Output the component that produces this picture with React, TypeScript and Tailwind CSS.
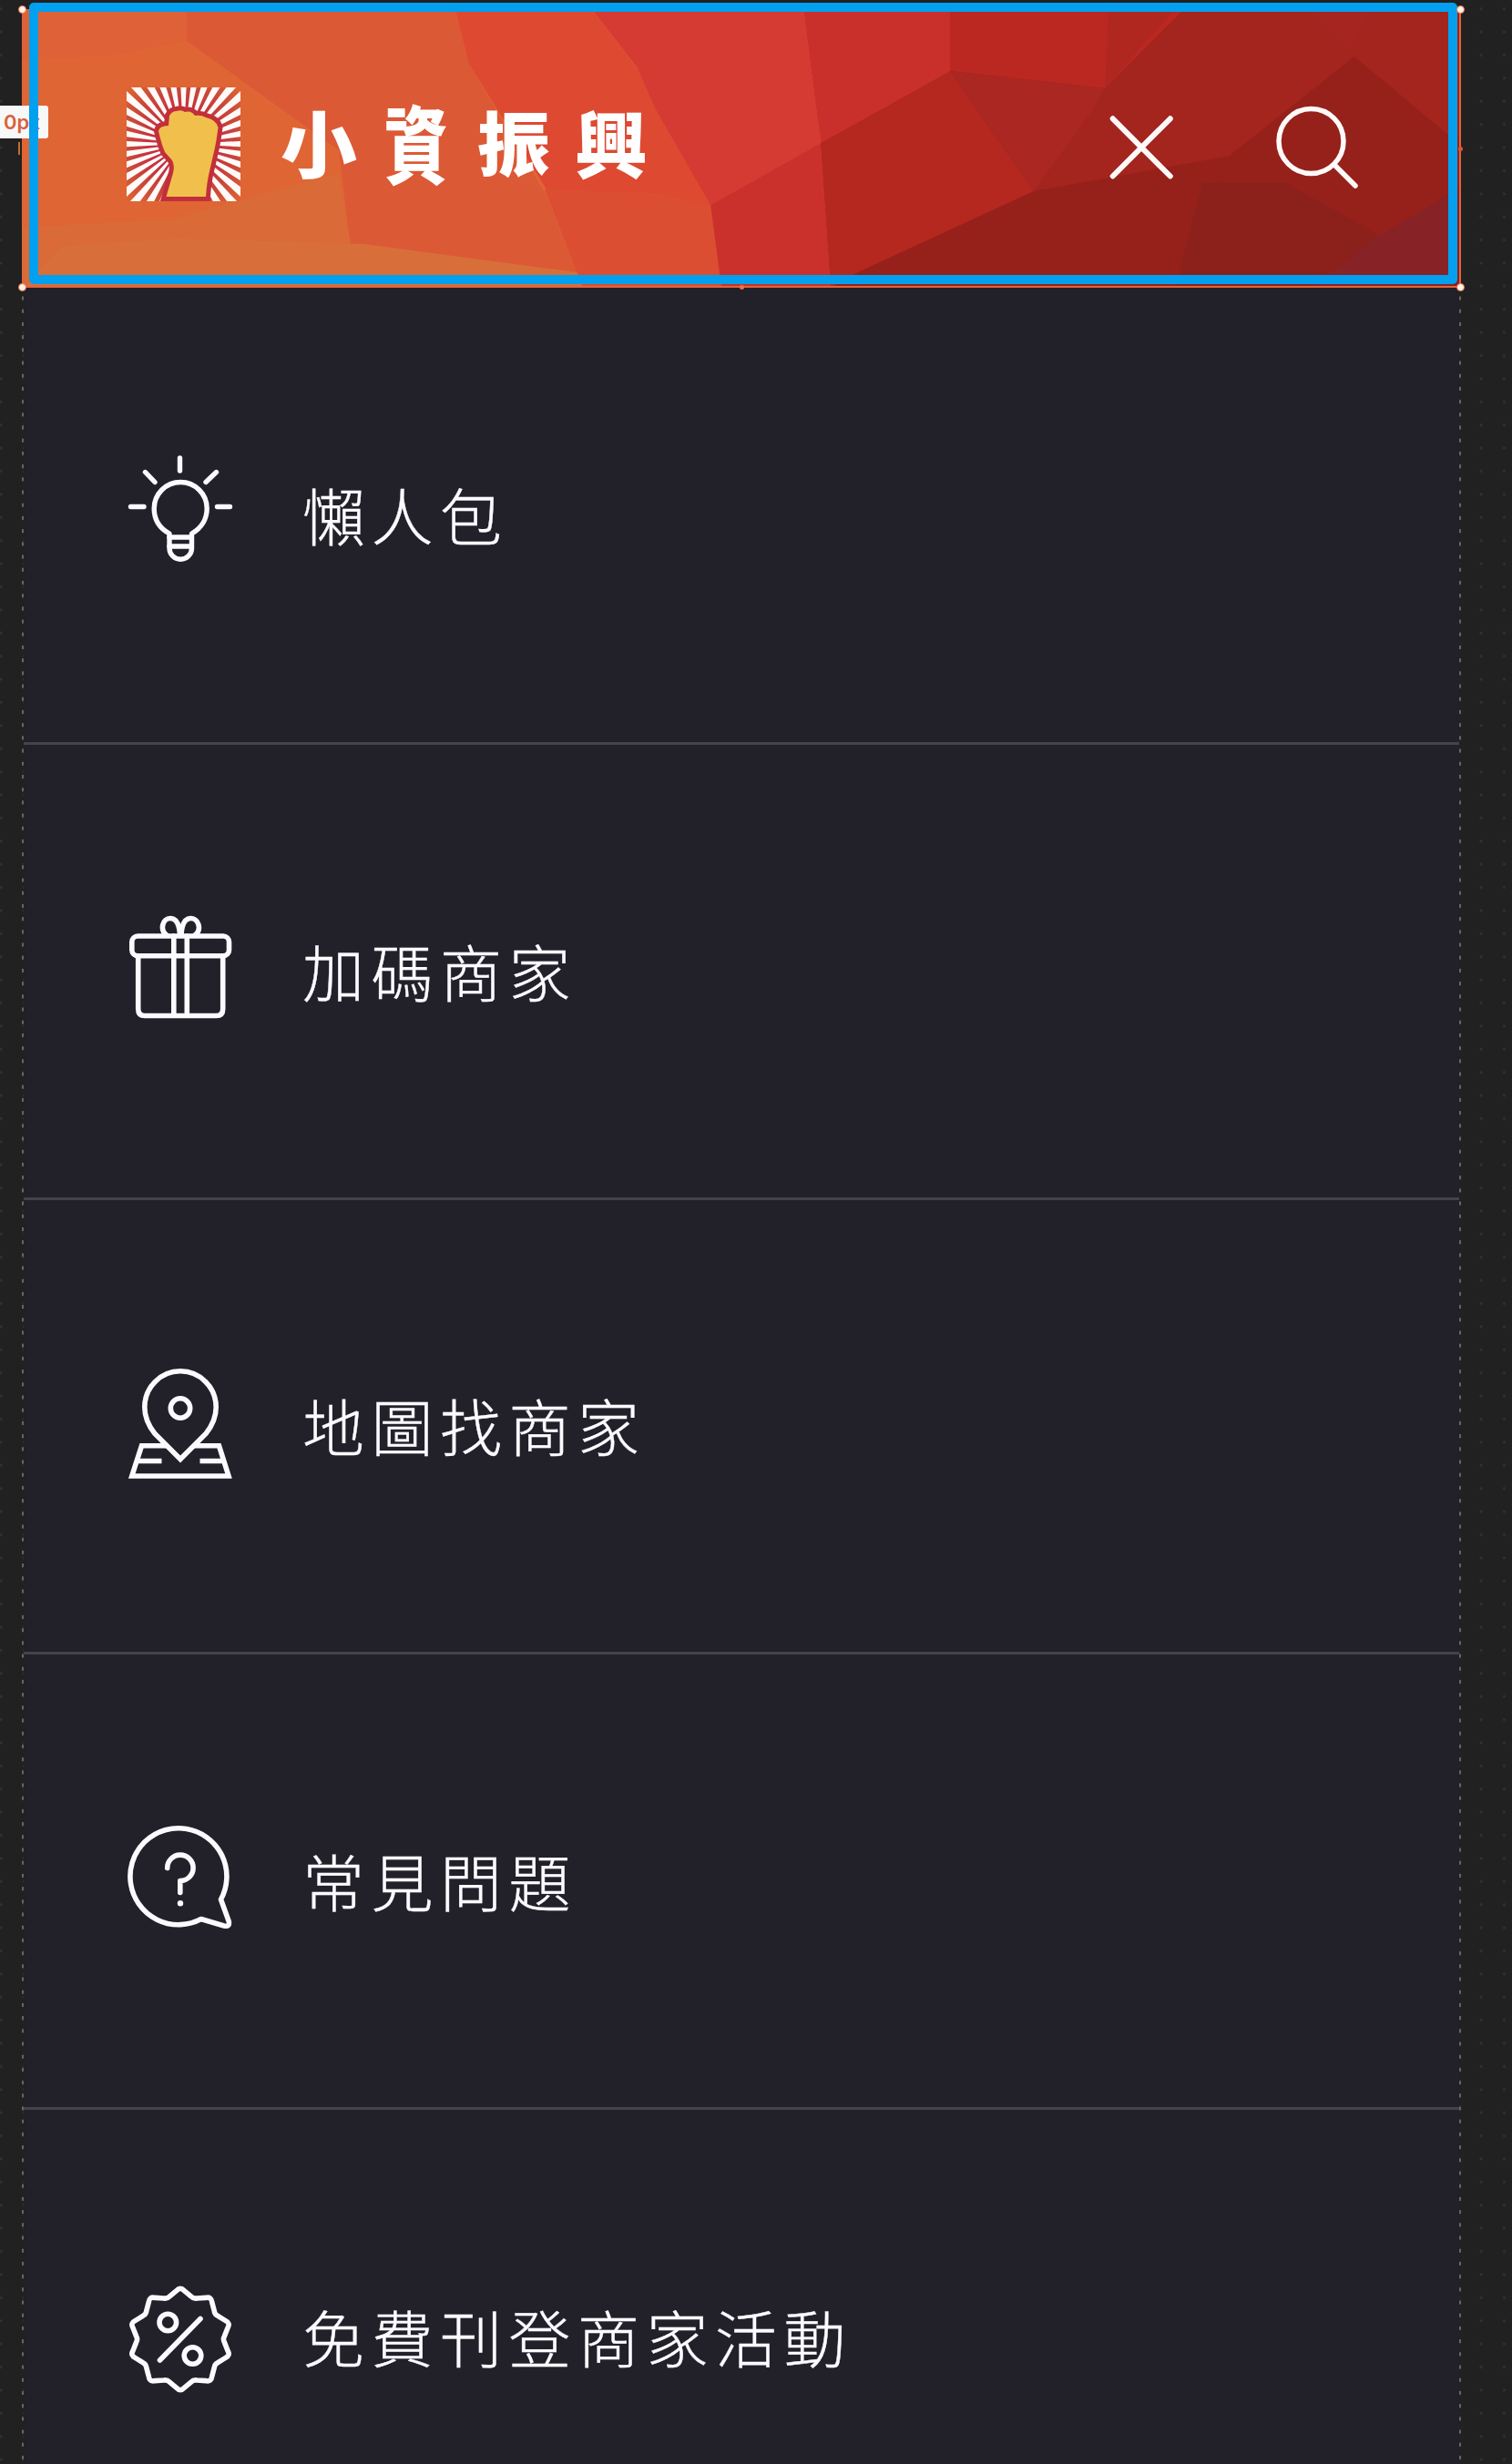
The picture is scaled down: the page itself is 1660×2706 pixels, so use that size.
import type { ReactNode } from 'react';

const facets: [string, string][] = [
  ['24,10 205,10 205,45 130,60 24,66', '#de6137'],
  ['205,10 560,10 515,70 600,215 640,316 390,316 372,165 205,45', '#dc5936'],
  ['24,250 190,240 372,190 385,268 640,300 650,316 24,316', '#da6a37'],
  ['24,316 70,270 195,262 400,268 640,300 650,316', '#d86f3a'],
  ['515,70 500,10 650,10 703,80 780,225 600,208', '#de4931'],
  ['598,208 720,212 780,225 792,316 640,316', '#dc4e32'],
  ['912,316 901,157 1043,78 1043,10 1604,10 1604,316', '#9e231d'],
  ['650,10 882,10 901,157 780,225 720,120 700,75', '#d53a33'],
  ['882,10 1043,10 1043,78 901,157', '#ca302b'],
  ['780,225 901,157 912,316 792,316', '#cb312c'],
  ['901,157 1043,78 1135,210 940,300 912,316', '#b42820'],
  ['1213,97 1300,10 1604,10 1604,180 1487,62 1345,175 1135,210', '#a3251e'],
  ['1043,10 1300,10 1213,97 1043,78', '#ba2821'],
  ['1290,10 1213,97 1217,10', '#b02720'],
  ['1043,78 1213,97 1200,120 1135,210', '#aa2722'],
  ['1440,10 1505,10 1480,55', '#a72520'],
  ['912,316 940,300 1135,210 1345,172 1604,150 1604,316', '#96211a'],
  ['1487,62 1604,160 1604,316 1290,316 1345,175', '#96211a'],
  ['1320,200 1410,200 1500,250 1590,316 1290,316', '#8c211b'],
  ['1510,262 1604,205 1604,316 1440,316', '#872227'],
];

function Backdrop() {
  return (
    <svg className="absolute inset-0 h-full w-full" viewBox="24 10 1580 306" preserveAspectRatio="none">
      <rect x="24" y="10" width="1580" height="306" fill="#e06534" />
      {facets.map(([points, fill]) => (
        <polygon key={points} points={points} fill={fill} />
      ))}
    </svg>
  );
}

const rayAngles = Array.from({ length: 36 }, (_, i) => i * 10);
const fist =
  'M186 127 Q189 122 194 122 Q199 120 203 123 Q210 121 214 127 Q221 126 226 129 Q238 132 239.500 140 Q238 152 236 162 L230 188 Q227 200 226 216 L182.500 216 L190 190 Q192 182 189 176 L181 167 Q178 160 176 152 L174 144 Q175 138 185 138 Z';

function FistLogo() {
  return (
    <svg className="size-[125px] shrink-0" viewBox="139 96 125 125">
      <defs>
        <radialGradient id="burst" gradientUnits="userSpaceOnUse" cx="201.5" cy="158" r="88">
          <stop offset="0.4" stopColor="#c42f40" />
          <stop offset="0.7" stopColor="#c9483a" />
          <stop offset="0.95" stopColor="#dd6134" />
        </radialGradient>
      </defs>
      <rect x="139" y="96" width="125" height="125" fill="url(#burst)" />
      {rayAngles.map((a) => (
        <polygon key={a} points="201.500,158 196.500,58 206.500,58" fill="#fffaf7" transform={`rotate(${a} 201.5 158)`} />
      ))}
      <path d={fist} fill="#c22f3a" stroke="#c22f3a" strokeWidth="10" />
      <path d={fist} fill="#f1c04c" />
    </svg>
  );
}

const iconClass = 'h-[130px] w-[124px] shrink-0 overflow-visible';
const iconStroke = {
  fill: 'none',
  stroke: '#fbfaff',
  strokeWidth: 5.6,
  strokeLinecap: 'round' as const,
  strokeLinejoin: 'round' as const,
};

function Bulb() {
  return (
    <svg className={iconClass} viewBox="136 501 124 130" {...iconStroke} strokeWidth={5.4}>
      <path d="M197.500 503V517M143.500 556.500H158M238.500 556.500H252.500M159.500 518.500L170 529.500M237.500 518.500L226 529.500" />
      <path d="M186 586C175 580 169.200 570 169.200 558.500A29 29 0 0 1 227.200 558.500C227.200 570 221 580 210.500 586V602A12.200 12.200 0 0 1 186 602Z" />
      <path d="M186 590H210M186 600H210" />
    </svg>
  );
}

function Gift() {
  return (
    <svg className={iconClass} viewBox="136 1001 124 130" {...iconStroke}>
      <rect x="144.800" y="1028" width="106.700" height="21.700" rx="6.500" />
      <path d="M151.700 1050V1108Q151.700 1115.500 159 1115.500H237.500Q244.700 1115.500 244.700 1108V1050M190.800 1028V1115M205.300 1028V1115" />
      <path d="M183 1027C175 1021 178.500 1008.500 187 1008.500C195 1008.500 197 1017 197.500 1027M214 1027C222 1021 218 1008.500 209.500 1008.500C201.500 1008.500 199.500 1017 199 1027" />
    </svg>
  );
}

function MapPin() {
  return (
    <svg className={iconClass} viewBox="136 1500.5 124 130" {...iconStroke} strokeLinecap="butt" strokeLinejoin="miter">
      <path d="M198 1602L170 1574C162 1564 158.800 1556 158.800 1545A39.200 39.700 0 0 1 237.200 1545C237.200 1556 234 1564 226 1574Z" />
      <circle cx="198" cy="1546" r="10.700" />
      <path d="M184 1587.300H155.500L144.800 1620.500H251L240.500 1587.300H212M150 1604H177.500M219.500 1604H246" />
    </svg>
  );
}

function Question() {
  return (
    <svg className={iconClass} viewBox="136 2000 124 130" {...iconStroke}>
      <path d="M242.500 2086L251.200 2110Q252.500 2116.500 246 2115L220.800 2107.500A53 53 0 1 1 242.500 2086Z" />
      <path d="M183.700 2051.500A14.200 14.200 0 1 1 197.800 2065.500V2078.500" />
      <circle cx="198" cy="2090.300" r="3.200" fill="#fbfaff" stroke="none" />
    </svg>
  );
}

const badge = Array.from({ length: 10 }, (_, i) => {
  const at = (deg: number, r: number) =>
    `${(198 + r * Math.sin((deg * Math.PI) / 180)).toFixed(1)} ${(2569.5 - r * Math.cos((deg * Math.PI) / 180)).toFixed(1)}`;
  const d = i * 36;
  return `${i ? 'L' : 'M'}${at(d - 4.5, 53.5)}Q${at(d, 58)} ${at(d + 4.5, 53.5)}L${at(d + 14, 48.5)}Q${at(d + 18, 46.5)} ${at(d + 22, 48.5)}`;
}).join('');

function Discount() {
  return (
    <svg className={iconClass} viewBox="136 2501.5 124 130" {...iconStroke}>
      <path d={`${badge}Z`} />
      <circle cx="184.300" cy="2551" r="9.300" />
      <circle cx="211.500" cy="2587.500" r="9.300" />
      <path d="M220 2547L175.500 2592.500" />
    </svg>
  );
}

const items: { label: string; icon: ReactNode }[] = [
  { label: '懶人包', icon: <Bulb /> },
  { label: '加碼商家', icon: <Gift /> },
  { label: '地圖找商家', icon: <MapPin /> },
  { label: '常見問題', icon: <Question /> },
  { label: '免費刊登商家活動', icon: <Discount /> },
];

const wordmark: { char: string; shape: string }[] = [
  { char: '小', shape: 'scale-x-105' },
  { char: '資', shape: 'scale-x-[0.88] scale-y-[1.16]' },
  { char: '振', shape: 'scale-y-95' },
  { char: '興', shape: '' },
];

function Handle() {
  return <span className="size-[9px] rounded-full border border-[#f0703c] bg-[#fff3ea]" />;
}

function SelectionOverlay() {
  return (
    <>
      <div className="absolute inset-0 border-r-2 border-b-2 border-[#e3633a]" />
      <div className="absolute -top-[7px] right-1 bottom-1 left-2 rounded-[5px] border-[10px] border-[#02a0ee]" />
      <div className="absolute -inset-[4px] flex flex-col justify-between">
        <div className="flex justify-between">
          <Handle />
          <Handle />
        </div>
        <div className="flex items-center justify-between pr-[2px]">
          <span className="h-[14px] w-[2px] bg-[#c0702c]" />
          <span className="size-[5px] rounded-full bg-[#e0562c]" />
        </div>
        <div className="flex items-center justify-between">
          <Handle />
          <span className="size-[5px] rounded-full bg-[#f0703c]" />
          <Handle />
        </div>
      </div>
    </>
  );
}

function DashedEdge() {
  return (
    <span className="w-[2px] shrink-0 bg-[repeating-linear-gradient(to_bottom,transparent_0,transparent_9px,#67665f_10px,#67665f_13px,transparent_14.200px)]" />
  );
}

export default function App() {
  return (
    <div
      lang="zh-Hant"
      className="h-[2706px] w-[1660px] overflow-hidden bg-[#212121] bg-[radial-gradient(circle,#323232_0,#323232_1px,transparent_2px)] bg-[size:25.400px_25.400px] bg-[position:-11.700px_-3px] pt-[10px] pl-[24px] font-['Noto_Sans_CJK_TC',sans-serif]"
    >
      <main className="w-[1580px]">
        <header className="relative flex h-[306px] items-center justify-between pr-[111px] pl-[115px]">
          <Backdrop />
          <div className="relative mb-[9px] flex items-center gap-[46px]">
            <FistLogo />
            <h1 className="flex pb-[9px] text-[80px] leading-[80px] font-black text-white">
              {wordmark.map(({ char, shape }) => (
                <span key={char} className={`mr-[27px] inline-block ${shape}`}>{char}</span>
              ))}
            </h1>
          </div>
          <div className="relative mb-[2px] flex items-center gap-[110px]">
            <svg className="size-[72px]" viewBox="1217 126 72 72" fill="none" stroke="#fffafa" strokeWidth="6" strokeLinecap="round">
              <path d="M1221.700 130.300L1284.800 193.500M1284.800 130.300L1221.700 193.500" />
            </svg>
            <svg className="size-[94px]" viewBox="1399 115 94 94" fill="none" stroke="#fffafa" strokeWidth="5.500" strokeLinecap="round">
              <circle cx="1439.500" cy="155" r="35.500" />
              <path d="M1465 181L1488 204" />
            </svg>
          </div>
          <div className="absolute top-[106px] -left-[24px] flex h-[36px] w-[53px] items-center rounded-r-[3px] bg-[#f8f8f8] pl-[4px] font-['Inter',sans-serif] text-[22px] font-semibold text-[#d9623b]">
            0px
          </div>
          <SelectionOverlay />
        </header>
        <div className="flex">
          <DashedEdge />
          <nav className="flex-1 bg-[#22212a]">
            {items.map(({ label, icon }) => (
              <a
                key={label}
                className="flex h-[499.500px] items-center gap-[72px] border-b-[3px] border-[#44434b] pl-[110px] first:h-[502px] last:border-0"
              >
                {icon}
                <span className="mb-[1px] text-[68px] leading-[68px] font-light tracking-[7.500px] text-[#fbfaff] [-webkit-text-stroke:0.400px_#fbfaff]">
                  {label}
                </span>
              </a>
            ))}
          </nav>
          <DashedEdge />
        </div>
      </main>
    </div>
  );
}
